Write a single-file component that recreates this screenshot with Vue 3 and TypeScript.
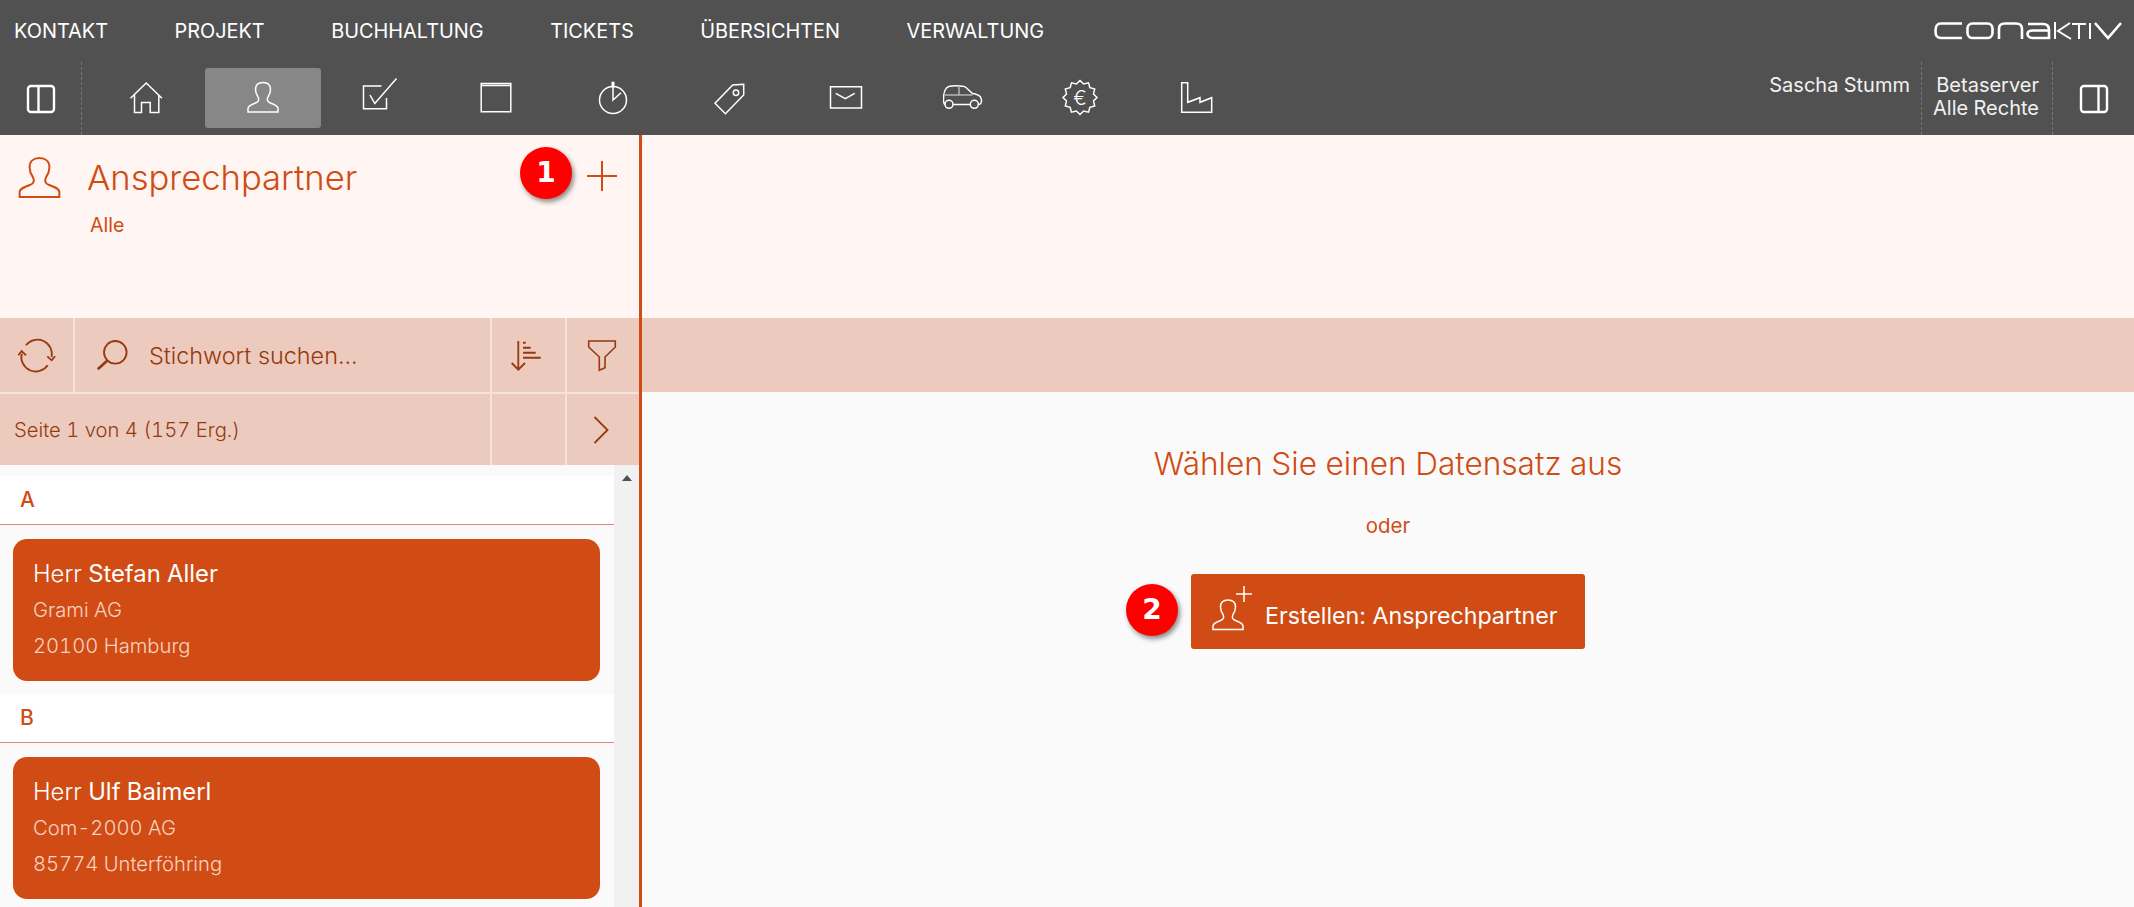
<script setup lang="ts">
interface NavIcon {
  name: string;
  d: string;
  dim?: string;
  euro?: boolean;
  active?: boolean;
}

interface Contact {
  letter: string;
  salutation: string;
  name: string;
  company: string;
  city: string;
}

const menu = ["KONTAKT", "PROJEKT", "BUCHHALTUNG", "TICKETS", "ÜBERSICHTEN", "VERWALTUNG"];

// 12 pointed seal round the euro sign
function seal(): string {
  const pts: string[] = [];
  for (let i = 0; i < 24; i++) {
    const r = i % 2 === 0 ? 17 : 14;
    const a = ((i * 15 - 90) * Math.PI) / 180;
    pts.push(`${(20 + r * Math.cos(a)).toFixed(1)} ${(19.5 + r * Math.sin(a)).toFixed(1)}`);
  }
  return "M" + pts.join("L") + "Z";
}

const personPath =
  "M5 34V30.5C5 27.5 9 26.2 13 24.8C16 23.7 16.2 21.5 15 19C13 16 12.5 13.5 12.5 11.5C12.5 7 15.5 4.5 20 4.5C24.5 4.5 27.5 7 27.5 11.5C27.5 13.5 27 16 25 19C23.8 21.5 24 23.7 27 24.8C31 26.2 35 27.5 35 30.5V34Z";

const navIcons: NavIcon[] = [
  { name: "home", d: "M4.5 20.3L20.2 5L36 20.3M8.5 16.5V34.5H15.5V24.5H24.2V34.5H32.8V16.5" },
  { name: "person", d: personPath, active: true },
  { name: "tasks", d: "M21.5 8H3.5V30.7H26.5V20M10 17L14.8 25.5L36.5 0.5" },
  { name: "calendar", d: "M5.2 5.5H34.8V33.7H5.2ZM5.2 7.5H34.8" },
  {
    name: "time",
    d: "M33.5 22A13.5 13.5 0 1 1 6.5 22A13.5 13.5 0 1 1 33.5 22ZM20 3.7V22L28 14.7M19.2 3.7V8.7M20.8 3.7V8.7",
  },
  {
    name: "tag",
    d: "M33.7 6.3L22.7 7L5 25.3L15.4 35.7L33.7 17ZM28.7 14.7A2.7 2.7 0 1 1 23.3 14.7A2.7 2.7 0 1 1 28.7 14.7Z",
  },
  { name: "mail", d: "M4.5 8.7H35.5V30H4.5ZM9.7 15.3L19.3 20.7L28.7 15.3" },
  {
    name: "car",
    d: "M1.8 26.5C0.5 26 0.5 24 0.5 21C0.5 16 1.5 12 3.5 10C5 8.5 8 7.8 13 7.8C18 7.8 21 8 23 9.5L29.5 15.5C33 16 36 17 37.5 19C38.5 21 38.5 24 38 25C37.5 26 36.5 26.5 35.5 26.5M10 26.5H27.3M10 26.3A4 4 0 1 1 2 26.3A4 4 0 1 1 10 26.3ZM35.3 26.3A4 4 0 1 1 27.3 26.3A4 4 0 1 1 35.3 26.3Z",
    dim: "M1.5 17H29.5M16 8V17",
  },
  { name: "billing", d: seal(), euro: true },
  { name: "factory", d: "M4.7 4.7H10.7V24.3L23 19.7V24.3L34.7 19.7V34.3H4.7Z" },
];

const contacts: Contact[] = [
  { letter: "A", salutation: "Herr", name: "Stefan Aller", company: "Grami AG", city: "20100 Hamburg" },
  { letter: "B", salutation: "Herr", name: "Ulf Baimerl", company: "Com-2000 AG", city: "85774 Unterföhring" },
];
</script>

<template>
  <div class="app">
    <header class="topbar">
      <nav class="menu">
        <span v-for="item in menu" :key="item" class="menu-item">{{ item }}</span>
        <svg class="logo" width="205" height="30" viewBox="0 0 205 30" fill="none" stroke="#fff" stroke-width="2.6">
          <path d="M37 7.5H16C12 7.5 10.5 10 10.5 15C10.5 20 12 22 16 22H37" />
          <rect x="42.5" y="7.5" width="25" height="14.5" rx="5" />
          <path d="M74 23V13C74 9 76 7.5 80 7.5H91C95 7.5 97 9 97 13V23" />
          <path d="M103 8H118C122 8 124 10 124 14V22H108C104.5 22 102.5 20 102.5 18C102.5 15.5 104.5 14.5 108 14.5H124" />
          <path d="M130 6V23M145 7L133 15L146 23" stroke-width="2" />
          <path d="M147 8H161M154 8V23M165 7V23" stroke-width="2" />
          <path d="M170 7L183 22L196 7" />
        </svg>
      </nav>
      <div class="iconbar">
        <div class="panel-btn panel-left">
          <svg width="30" height="30" viewBox="0 0 30 30" fill="none" stroke="#fff" stroke-width="2.4">
            <rect x="2" y="2" width="26" height="26" rx="3" />
            <path d="M12.5 2V28" />
          </svg>
        </div>
        <div class="tiles">
          <div v-for="icon in navIcons" :key="icon.name" class="tile" :class="{ active: icon.active }">
            <svg width="40" height="40" viewBox="0 0 40 40" fill="none" stroke="#fff" stroke-width="1.5">
              <path :d="icon.d" />
              <path v-if="icon.dim" :d="icon.dim" stroke="#b5b5b5" />
              <text v-if="icon.euro" x="20" y="26.5" class="euro">€</text>
            </svg>
          </div>
        </div>
        <div class="session">
          <div class="session-cell user">Sascha Stumm</div>
          <div class="session-cell server">
            <span>Betaserver</span>
            <span>Alle Rechte</span>
          </div>
        </div>
        <div class="panel-btn">
          <svg width="30" height="30" viewBox="0 0 30 30" fill="none" stroke="#fff" stroke-width="2.4">
            <rect x="2" y="2" width="26" height="26" rx="3" />
            <path d="M19.5 2V28" />
          </svg>
        </div>
      </div>
    </header>

    <main class="main">
      <aside class="sidebar">
        <section class="side-head">
          <div class="head-row">
            <svg width="53" height="53" viewBox="0 0 40 40" fill="none" stroke="#d04c14" stroke-width="1.5">
              <path :d="personPath" />
            </svg>
            <h1 class="title">Ansprechpartner</h1>
            <svg class="plus" width="30" height="30" viewBox="0 0 30 30" stroke="#d04c14" stroke-width="2">
              <path d="M15 0V30M0 15H30" />
            </svg>
          </div>
          <div class="scope">Alle</div>
          <span class="badge badge-one">1</span>
        </section>

        <div class="tools">
          <div class="tool refresh">
            <svg width="40" height="40" viewBox="0 0 40 40" fill="none" stroke="#96390f" stroke-width="1.8">
              <path d="M9 10.3A14.5 14.5 0 0 1 34.7 22M30.7 30.3A14.5 14.5 0 0 1 4.7 18.7" />
              <path d="M30.3 21.3L34.7 25.3L38 21.3M1.3 20.3L4.7 16L9 20.3" />
            </svg>
          </div>
          <label class="search">
            <svg width="40" height="40" viewBox="0 0 40 40" fill="none" stroke="#96390f" stroke-width="1.8">
              <circle cx="23.3" cy="17.3" r="11.3" />
              <path d="M15.7 25.3L5.7 34.3" stroke-width="2.6" />
            </svg>
            <input class="search-input" type="text" placeholder="Stichwort suchen..." />
          </label>
          <div class="tool divided">
            <svg class="sort-icon" width="40" height="40" viewBox="0 0 40 40" fill="none" stroke="#96390f" stroke-width="1.8">
              <path d="M11.3 6V34.7M4.7 28L11.3 34.7L18 28" />
              <path d="M16 7.7H18.7M16 12.7H23.7M16 17.7H28.7M16 22.7H33.7" stroke-width="2" />
            </svg>
          </div>
          <div class="tool divided">
            <svg class="filter-icon" width="40" height="40" viewBox="0 0 40 40" fill="none" stroke="#96390f" stroke-width="1.6">
              <path d="M6.7 6H33.3V12L23 22V32.7L17.3 35.3V22L6.7 12Z" />
            </svg>
          </div>
        </div>

        <div class="pager">
          <div class="pager-text">Seite 1 von 4 (157 Erg.)</div>
          <div class="tool divided"></div>
          <div class="tool divided">
            <svg class="next-icon" width="16" height="28" viewBox="0 0 16 28" fill="none" stroke="#96390f" stroke-width="1.8">
              <path d="M1.5 1L14.5 14L1.5 27" />
            </svg>
          </div>
        </div>

        <div class="list-wrap">
          <div class="list">
            <section v-for="c in contacts" :key="c.letter" class="group">
              <h2 class="letter">{{ c.letter }}</h2>
              <article class="card">
                <div class="card-name">
                  <span class="salutation">{{ c.salutation }}</span> {{ c.name }}
                </div>
                <div class="card-line">{{ c.company }}</div>
                <div class="card-line">{{ c.city }}</div>
              </article>
            </section>
          </div>
          <div class="scrollbar"><span class="scroll-up"></span></div>
        </div>
      </aside>

      <section class="detail">
        <div class="detail-head"></div>
        <div class="detail-tools"></div>
        <div class="detail-body">
          <h2 class="empty-title">Wählen Sie einen Datensatz aus</h2>
          <p class="empty-or">oder</p>
          <div class="create-wrap">
            <span class="badge badge-two">2</span>
            <button class="create" type="button">
              <svg class="create-icon" width="45" height="46" viewBox="0 0 45 46" fill="none" stroke="#fff" stroke-width="1.5">
                <path :d="personPath" transform="translate(0 9.5)" />
                <path d="M36 0V16M28 8H44" />
              </svg>
              <span class="create-text">Erstellen: Ansprechpartner</span>
            </button>
          </div>
        </div>
      </section>
    </main>
  </div>
</template>

<style>
html,
body {
  margin: 0;
  overflow: hidden;
}
</style>

<style scoped>
.app {
  height: 100vh;
  display: flex;
  flex-direction: column;
  font-family: Inter, "Noto Sans", sans-serif;
  font-variant-numeric: tabular-nums;
  overflow: hidden;
}

.topbar {
  background: #515151;
  color: #fff;
  height: 135px;
  flex: none;
}

.menu {
  height: 62px;
  display: flex;
  align-items: center;
  gap: 66.5px;
  padding-left: 14px;
}

.menu-item {
  font-size: 19.9px;
}

.logo {
  margin-left: auto;
  margin-right: 4px;
}

.iconbar {
  height: 73px;
  display: flex;
}

.panel-btn {
  width: 81px;
  display: flex;
  align-items: center;
  justify-content: center;
}

.panel-left {
  border-right: 1px dashed #777;
}

.tiles {
  display: flex;
  margin-left: 6px;
}

.tile {
  width: 116.7px;
  height: 60px;
  margin-top: 6px;
  border-radius: 3px;
  display: flex;
  align-items: center;
  justify-content: center;
}

.tile.active {
  background: #878787;
}

.euro {
  font-size: 20px;
  font-weight: 300;
  fill: #fff;
  stroke: none;
  text-anchor: middle;
}

.session {
  margin-left: auto;
  display: flex;
  font-size: 20px;
  line-height: 23px;
  color: #f1f1f1;
  text-align: right;
}

.session-cell {
  padding-top: 12px;
  padding-right: 11px;
  border-right: 1px dashed #777;
}

.server {
  display: flex;
  flex-direction: column;
  padding-left: 11px;
  padding-right: 13px;
}

.main {
  flex: 1;
  min-height: 0;
  display: flex;
}

.sidebar {
  width: 642px;
  flex: none;
  box-sizing: border-box;
  border-right: 3px solid #d04c14;
  display: flex;
  flex-direction: column;
  background: #fafafa;
}

.side-head {
  position: relative;
  height: 183px;
  flex: none;
  box-sizing: border-box;
  padding: 17px 22px 0 13px;
  background: #fff5f2;
  color: #d04c14;
}

.head-row {
  display: flex;
  align-items: center;
  gap: 21px;
}

.title {
  flex: 1;
  margin: 0 0 3px;
  font-size: 34.6px;
  font-weight: 300;
  line-height: 40px;
}

.plus {
  margin-bottom: 6px;
}

.scope {
  margin: 9px 0 0 77px;
  font-size: 19.6px;
  font-weight: 400;
  line-height: 22px;
}

.badge {
  position: absolute;
  width: 52px;
  height: 52px;
  border-radius: 50%;
  background: #f00;
  color: #fff;
  font-family: "DejaVu Sans", sans-serif;
  font-size: 28px;
  font-weight: 700;
  line-height: 52px;
  text-align: center;
  box-shadow: 2px 3px 5px rgba(0, 0, 0, 0.45);
}

.badge-one {
  left: 520px;
  top: 12px;
}

.badge-two {
  left: -65px;
  top: 10px;
}

.tools {
  height: 76px;
  flex: none;
  display: flex;
  background: #eccbbe;
  border-bottom: 2px solid #f5e2da;
  box-sizing: border-box;
}

.tool {
  width: 74px;
  flex: none;
  box-sizing: border-box;
  display: flex;
  align-items: center;
  justify-content: center;
}

.refresh {
  width: 75px;
  border-right: 2px solid #f5e2da;
}

.divided {
  border-left: 2px solid #f5e2da;
}

.tools .divided:nth-child(3) {
  width: 75px;
}

.sort-icon {
  margin-right: 4px;
}

.filter-icon {
  margin-right: 3px;
}

.next-icon {
  margin-right: 5px;
}

.search {
  flex: 1;
  min-width: 0;
  display: flex;
  align-items: center;
  gap: 17px;
  padding-left: 17px;
}

.search-input {
  flex: 1;
  min-width: 0;
  border: 0;
  outline: 0;
  padding: 0;
  background: transparent;
  font: 300 23.4px Inter, sans-serif;
  color: #96390f;
}

.search-input::placeholder {
  color: #96390f;
  opacity: 1;
}

.pager {
  height: 71px;
  flex: none;
  display: flex;
  background: #eccbbe;
}

.pager-text {
  flex: 1;
  padding-left: 14px;
  font-size: 20.2px;
  font-weight: 300;
  line-height: 71px;
  color: #96390f;
}

.pager .divided:nth-child(2) {
  width: 75px;
}

.list-wrap {
  flex: 1;
  min-height: 0;
  display: flex;
  overflow: hidden;
}

.list {
  flex: 1;
  min-width: 0;
  padding-top: 11px;
}

.group {
  margin-bottom: 13px;
}

.letter {
  margin: 0;
  height: 48px;
  padding-left: 20px;
  border-bottom: 1px solid #e08c6c;
  background: #fff;
  color: #d04c14;
  font-size: 21px;
  font-weight: 500;
  line-height: 48px;
}

.card {
  height: 142px;
  box-sizing: border-box;
  margin: 14px 14px 0 13px;
  padding: 17px 20px 0;
  border-radius: 14px;
  background: #d04c14;
  color: #f7d3c2;
}

.card-name {
  font-size: 23.8px;
  font-weight: 400;
  line-height: 36px;
  color: #fff;
}

.salutation {
  font-weight: 300;
}

.card-line {
  font-size: 20.2px;
  font-weight: 300;
  line-height: 36px;
}

.scrollbar {
  width: 25px;
  flex: none;
  background: #f1f1f1;
  display: flex;
  justify-content: center;
  padding-top: 10px;
  box-sizing: border-box;
}

.scroll-up {
  width: 0;
  height: 0;
  border-left: 5.5px solid transparent;
  border-right: 5.5px solid transparent;
  border-bottom: 6px solid #505050;
}

.detail {
  flex: 1;
  min-width: 0;
  display: flex;
  flex-direction: column;
}

.detail-head {
  height: 183px;
  flex: none;
  background: #fff5f2;
}

.detail-tools {
  height: 74px;
  flex: none;
  background: #eccbbe;
}

.detail-body {
  flex: 1;
  background: #fafafa;
  display: flex;
  flex-direction: column;
  align-items: center;
  padding-top: 52px;
  color: #d04c14;
}

.empty-title {
  margin: 0;
  font-size: 31.6px;
  font-weight: 300;
  line-height: 40px;
}

.empty-or {
  margin: 28px 0 0;
  font-size: 20.4px;
  font-weight: 400;
  line-height: 28px;
}

.create-wrap {
  position: relative;
  margin-top: 34px;
}

.create {
  width: 394px;
  height: 75px;
  border: 0;
  border-radius: 3px;
  padding: 0 0 0 17px;
  display: flex;
  align-items: center;
  gap: 12px;
  background: #d04c14;
  color: #fff;
  font-family: Inter, sans-serif;
  font-size: 23.2px;
  font-weight: 400;
}

.create-icon {
  margin-bottom: 5px;
}

.create-text {
  margin-top: 9px;
}
</style>
